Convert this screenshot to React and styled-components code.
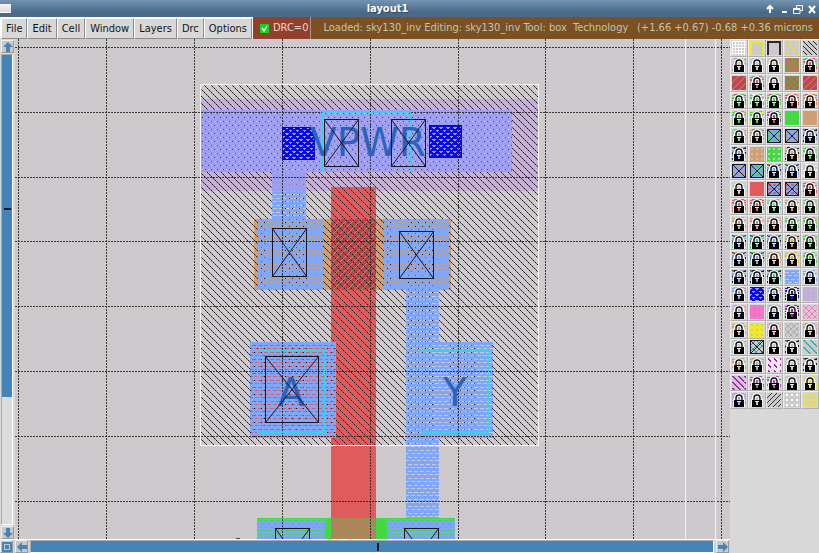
import React from "react";
import styled, { createGlobalStyle, css } from "styled-components";

const Global = createGlobalStyle`
  * { box-sizing: border-box; }
  body { margin: 0; background: #d8d8d8; overflow: hidden; }
  button { font: inherit; color: inherit; margin: 0; padding: 0; }
`;

const AppWindow = styled.div`
  display: flex;
  flex-direction: column;
  height: 100vh;
  font-family: "DejaVu Sans Condensed", "DejaVu Sans", sans-serif;
  font-size: 11px;
  line-height: 14px;
  color: #141414;
`;

const TitleBar = styled.header`
  display: flex;
  align-items: center;
  flex: none;
  height: 17px;
  color: #fff;
  background: linear-gradient(#7394b2 0, #66859f 25%, #567693 50%, #46698a 75%, #4a6c88 100%);
`;

const WindowGlyph = styled.span`
  width: 11px;
  height: 9px;
  background: linear-gradient(#f4f4f4, #dadada);
  border-bottom: 1px solid #fff;
`;

const Title = styled.h1`
  flex: 1;
  margin: 0;
  text-align: center;
  font-size: 11px;
  line-height: 17px;
  font-weight: bold;
  text-shadow: 1px 1px 0 #2f4b64;
`;

const TitleControls = styled.div`
  display: flex;
  gap: 2px;
  padding-right: 1px;
`;

const TitleButton = styled.button`
  width: 12px;
  height: 14px;
  border: 0;
  background: none;
  svg { display: block; }
`;

const MenuBar = styled.nav`
  display: flex;
  flex: none;
  height: 22px;
  padding-left: 1px;
  background: #fafafa;
  white-space: pre;
`;

const MenuButton = styled.button`
  height: 21px;
  margin-top: 1px;
  padding: 0 4px;
  border: 1px solid;
  border-color: #fff #8c8c8c #8c8c8c #fff;
  background: #d8d8d8;
`;

const DrcToggle = styled.label`
  display: flex;
  align-items: center;
  gap: 4px;
  flex: none;
  padding: 0 2px 0 7px;
  margin-left: 1px;
  background: #90402c;
  color: #e8d8d0;
  border-right: 1px solid #b49488;
`;

const Check = styled.input`
  appearance: none;
  margin: 0;
  width: 9px;
  height: 9px;
  flex: none;
  background: #10d818 url("data:image/svg+xml,%3Csvg xmlns='http://www.w3.org/2000/svg' viewBox='0 0 9 9'%3E%3Cpath d='M2 4l2 3L7 2' fill='none' stroke='white' stroke-width='1.4'/%3E%3C/svg%3E");
`;

const Status = styled.div`
  display: flex;
  flex: 1;
  min-width: 0;
  align-items: center;
  justify-content: space-between;
  padding: 0 6px 0 12px;
  background: #7c5022;
  color: #bec8ae;
`;

const StatusText = styled.span`
  flex: none;
`;

const Coordinates = styled.output`
  flex: none;
`;

const Body = styled.main`
  display: flex;
  flex: 1;
  min-height: 0;
`;

const View = styled.section`
  display: grid;
  flex: 1;
  min-width: 0;
  grid-template-columns: 15px 1fr;
  grid-template-rows: 1fr 14px;
  background: #cec9cd;
`;

const VerticalBar = styled.div`
  display: flex;
  flex-direction: column;
  gap: 1px;
  padding: 1px 1px 0;
  background: #d8d8d8;
`;

const HorizontalBar = styled.div`
  display: flex;
  grid-column: 1 / -1;
  gap: 2px;
  padding: 0 1px 0 0;
  border-top: 1px solid #fff;
  background: #d0d0d0;
`;

const ArrowButton = styled.button`
  display: grid;
  place-items: center;
  flex: none;
  width: 13px;
  height: 13px;
  border: 1px solid;
  border-color: #eee #999 #999 #eee;
  background: #c8c8c8;
`;

const Trough = styled.div`
  display: flex;
  flex: 1;
  background: #dcdcdc;
  border: 1px solid;
  border-color: #aaa #fff #fff #aaa;
  ${(p) => p.$vertical && css`flex-direction: column; margin-right: 1px;`}
`;

const Thumb = styled.div`
  display: grid;
  place-items: center;
  flex: none;
  background: #4484b8;
  ${(p) =>
    p.$vertical
      ? css`height: 73%; align-content: start; padding-top: 153px;`
      : css`width: 100%; padding-left: 12px;`}
`;

const ThumbMark = styled.span`
  background: #101820;
  ${(p) => (p.$vertical ? css`width: 7px; height: 2px;` : css`width: 2px; height: 8px;`)}
`;

const Canvas = styled.svg`
  display: block;
  width: 100%;
  height: 100%;
  min-height: 0;
  overflow: hidden;
`;

const NetLabel = styled.text`
  font-family: "DejaVu Sans", sans-serif;
  font-size: 39px;
  fill: #2a62bc;
  text-anchor: middle;
`;

const Palette = styled.aside`
  flex: none;
  width: 89px;
  background: #d8d8d8;
`;

const PaletteGrid = styled.div`
  display: grid;
  grid-template-columns: repeat(5, 1fr);
  grid-template-rows: repeat(21, 1fr);
  height: 370px;
`;

const Swatch = styled.button`
  display: grid;
  place-items: center;
  min-height: 0;
  min-width: 0;
  overflow: hidden;
  border: 1px solid;
  border-color: #eee #b0b0b0 #b0b0b0 #eee;
  background: #d8d8d8;
  svg { display: block; }
`;

function Patterns() {
  const hatch = (id, color, dir = 1, step = 7, alt = color, width = 1) => (
    <pattern id={id} key={id} width={step * 2} height={step * 2} patternUnits="userSpaceOnUse">
      {Array.from({ length: step * 4 }, (_, k) => {
        const y = k % (step * 2);
        const offset = k < step * 2 ? 0 : step;
        const x = (y + offset) % (step * 2);
        return (
          <rect
            key={k}
            x={dir > 0 ? x : step * 2 - 1 - x}
            y={y}
            width={width}
            height="1"
            fill={y % 2 ? alt : color}
          />
        );
      })}
    </pattern>
  );
  const mesh = (id, color) => (
    <pattern id={id} key={id} width="6" height="6" patternUnits="userSpaceOnUse">
      <path d="M0 0l6 6M6 0L0 6" stroke={color} strokeWidth="1.2" />
    </pattern>
  );
  const dots = (id, fill, dot) => (
    <pattern id={id} key={id} width="5" height="5" patternUnits="userSpaceOnUse">
      <rect width="5" height="5" fill={fill} />
      <rect x="1" y="1" width="2" height="2" fill={dot} />
    </pattern>
  );
  return (
    <defs>
      {hatch("hBlack", "#161416", 1, 7, "#5c585c")}
      {hatch("hYellow", "#e8e038", 1, 5)}
      {hatch("hTeal", "#28aca4", 1, 7, "#48b4b0", 2)}
      {hatch("hPurple", "#a018b8", 1, 6, "#a830bc", 2)}
      {hatch("hBlackSmall", "#202020", 1, 5)}
      {hatch("hBlackBack", "#303030", -1, 5)}
      {hatch("hGreen", "#68b030", 1, 7)}
      {hatch("hTan", "#c09058", -1, 7)}
      {mesh("mPink", "#f878c0")}
      {mesh("mGray", "#aaa")}
      {mesh("mGreen", "#58943c")}
      {mesh("mTeal", "#30a0a0")}
      {dots("dTan", "#d0a070", "#c8c0b0")}
      {dots("dGreen", "#42da42", "#b8d8b8")}
      {dots("dPink", "#fa70c8", "#d094bc")}
      {dots("dYellow", "#f0ec18", "#cec890")}
      {dots("dWhite", "#ccc", "#fff")}
      {dots("dYellow2", "#d8d4a0", "#f0e820")}
      <pattern id="gridWhite" width="3" height="3" patternUnits="userSpaceOnUse">
        <path d="M0 .5H3M.5 0V3" stroke="#fff" />
      </pattern>
      <pattern id="li" width="6" height="7" patternUnits="userSpaceOnUse">
        <path
          fill="#80a6fa"
          d="M0 0H6V2H0ZM4 2H6V3H4ZM0 3H6V5H0ZM1 5H3V6H1ZM0 6H6V7H0Z"
        />
      </pattern>
      <pattern id="metal" width="6" height="8" patternUnits="userSpaceOnUse">
        <rect width="6" height="8" fill="#9e9ef2" />
        <rect x="1" y="1" width="1" height="1" fill="#484880" />
        <rect x="4" y="5" width="1" height="1" fill="#38385c" />
        <rect x="4" y="1" width="2" height="1" fill="#ccb0d0" />
        <rect x="1" y="5" width="2" height="1" fill="#c4acd8" />
        <rect x="2" y="3" width="2" height="1" fill="#88a0f4" />
      </pattern>
      <pattern id="greenSpecks" width="12" height="10" patternUnits="userSpaceOnUse">
        <path fill="#50d860" d="M2 1h1v1H2zM8 5h1v1H8zM5 8h1v1H5z" />
      </pattern>
      <pattern id="via" width="7" height="6" patternUnits="userSpaceOnUse">
        <rect width="7" height="6" fill="#0808e8" />
        <path fill="#9c9cec" d="M0 1h2v1H0zM5 1h2v1H5zM0 2h1v1H0zM6 2h1v1H6zM2 4h3v1H2zM3 5h1v1H3z" />
      </pattern>
      <pattern id="lavender" width="4" height="4" patternUnits="userSpaceOnUse">
        <rect width="4" height="4" fill="#c4b0d8" />
        <rect x="1" y="1" width="1" height="1" fill="#b4a2cc" />
      </pattern>
      <pattern id="purpleDash" width="6" height="6" patternUnits="userSpaceOnUse">
        <rect width="6" height="6" fill="#f0e8f0" />
        <path d="M1 1l3 2" stroke="#a818b8" strokeWidth="1.5" />
      </pattern>
    </defs>
  );
}

function Contact({ x, y, w, h }) {
  return (
    <g stroke="#18161c" fill="none">
      <rect x={x + 0.5} y={y + 0.5} width={w - 1} height={h - 1} />
      <path d={`M${x} ${y}l${w} ${h}M${x + w} ${y}l${-w} ${h}`} shapeRendering="auto" />
    </g>
  );
}

function Box({ x, y, w, h, fill, ...rest }) {
  return <rect x={x} y={y} width={w} height={h} fill={fill} {...rest} />;
}

const gridX = Array.from({ length: 24 }, (_, i) => 18 + Math.round(i * 87.9));
const gridY = Array.from({ length: 20 }, (_, i) => 47 + Math.round(i * 64.8));

function Layout() {
  return (
    <Canvas role="img" aria-label="sky130_inv layout" shapeRendering="crispEdges">
      <Patterns />
      <g transform="translate(-15 -39)">
        <Box x={201} y={99} w={337} h={92} fill="#c6b0d8" />
        <Box x={331} y={187} w={45} h={400} fill="#e05c5c" />
        <Box x={254} y={219} w={197} h={71} fill="#d0a070" />
        <Box x={331} y={219} w={45} h={71} fill="#b84650" />
        <Box x={331} y={219} w={45} h={71} fill="url(#hTan)" />
        <Box x={250} y={342} w={86} h={96} fill="#e05c5c" />
        <Box x={200} y={84} w={338} h={362} fill="url(#hBlack)" />
        <Box x={257} y={518} w={198} h={70} fill="#42da42" />
        <Box x={331} y={518} w={45} h={70} fill="#b48060" />
        <Box x={331} y={518} w={45} h={70} fill="url(#hGreen)" />
        <path
          fill="url(#li)"
          d="M272 172H306V219H323V289H257V219H272ZM383 219H449V289H439V342H493V438H439V518H406V289H383ZM250 342H336V438H250ZM257 519H325V600H257ZM387 519H455V600H387Z"
        />
        <Box x={272} y={172} w={34} h={20} fill="#a49ce8" opacity=".7" />
        <Box x={201} y={110} w={311} h={62} fill="url(#metal)" />
        <Box x={260} y={120} w={226} h={42} fill="url(#greenSpecks)" />
        <Box x={282.5} y={127.5} w={32} h={32} fill="url(#via)" stroke="#0000f0" />
        <Box x={429.5} y={125.5} w={32} h={32} fill="url(#via)" stroke="#0000f0" />

        <g fill="none" stroke="#222" strokeDasharray="2 1">
          {gridX.map((x) => <path key={x} d={`M${x + 0.5} 39V1300`} opacity=".85" />)}
          {gridY.map((y) => <path key={y} d={`M15 ${y + 0.5}H2000`} opacity=".85" />)}
        </g>
        <rect x="200.5" y="84.5" width="338" height="361" fill="none" stroke="#fafafa" />
        <path d="M685.5 39V1300M715.5 39V1300" stroke="#f4f4f4" />

        <g fill="none" stroke="#38d4ec">
          <rect x="322.5" y="112.5" width="88" height="59" />
          <rect x="257.5" y="350.5" width="67" height="82" />
          <rect x="421.5" y="350.5" width="67" height="82" />
        </g>
        <NetLabel x="368" y="156">VPWR</NetLabel>
        <NetLabel x="291" y="406">A</NetLabel>
        <NetLabel x="455" y="406">Y</NetLabel>
        <Contact x={324} y={119} w={35} h={48} />
        <Contact x={391} y={119} w={35} h={48} />
        <Contact x={272} y={228} w={35} h={49} />
        <Contact x={399} y={231} w={35} h={48} />
        <Contact x={265} y={356} w={54} h={67} />
        <Contact x={275} y={528} w={35} h={48} />
        <Contact x={404} y={528} w={35} h={48} />
        <path d="M236 538.5H240" stroke="#444" />
      </g>
    </Canvas>
  );
}

const blue = "#80a8f8";
const green = "#42da42";
const tan = "#d0a070";
const red = "#e05c5c";
const gray = "#c8c8c8";
const lock = (color, second, dark) => ({ kind: "lock", color, second, dark });
const fill = (base, pattern) => ({ kind: "fill", base, pattern });
const cross = (base, dash, pattern) => ({ kind: "cross", base, dash, pattern });
const edge = (color) => ({ kind: "edge", color });

const layers = [
  fill("#ccc", "gridWhite"), edge("#f0ec10"), edge("#302830"), fill("#cec9cd", "hYellow"), fill("#cec9cd", "hBlackSmall"),
  lock(gray, "#999"), lock(gray, "#b8c4d8"), lock(gray, "#e4dc38"), fill("#ac7c58", "hGreen"), lock(red, green),
  fill("#bd4652", "hTan"), lock(red, "#88b090"), lock(gray), fill("#ac7858", "mGreen"), fill("#bd4652", "hTan"),
  lock(green, "#a06840"), lock(green, "#fff"), lock(green, red), lock(red, tan), lock("#e8883c", red),
  lock(green, tan), lock(green, "#f0e820"), lock("#c03888", green), fill(green), fill(tan),
  lock("#80d890", "#d88080"), lock(tan, "#888"), cross(blue, green), cross(blue, tan), lock(blue, "#222", true),
  lock(blue, "#222", true), fill(tan, "dTan"), fill(green, "dGreen"), lock(tan, "#222"), lock(green, "#b8b8b8"),
  cross(blue, tan), cross(blue, green), lock(blue, tan, true), lock(blue, green, true), lock(gray, "#fff"),
  lock(gray), fill(red), cross(blue, red), cross(blue, red), lock(red, "#e8a0a0"),
  lock(red, red), lock(red, red), lock("#70d880", "#ddd"), lock(tan, "#ddd"), lock("#70d880", tan),
  lock(tan, "#ddd"), lock("#e88888", "#ddd"), lock(tan, "#c4a4a0"), lock(green, "#ddd"), lock(green, tan),
  lock(blue, green, true), lock("#48b8c0", green, true), lock(blue, green, true), lock(tan, "#222"), lock(green, "#999"),
  lock(blue, tan, true), lock(blue, green, true), lock(tan, "#d0b040"), lock("#e0b838", "#f0dc30"), lock(green, "#bbb"),
  lock(blue, "#222", true), lock(blue, "#222", true), lock("#50c890", "#222", true), fill("#c4cce8", "li"), lock(blue, "#ccd8f0"),
  lock(blue, tan), fill("#0808e8", "via"), lock(blue, tan), lock("#1818e8", "#222"), fill("#c4b0d8", "lavender"),
  lock("#c4b0d8", tan), fill("#f870c8", "dPink"), lock("#c4b0d8", "#b0a0d0"), lock("#a018b8", "#222"), fill("#dcc8d4", "mPink"),
  lock(tan, "#e8d090"), fill("#f0ec18", "dYellow"), lock("#f090c0", tan), fill("#ccc", "mGray"), lock(tan, "#c4a0c8"),
  lock(gray, "#80c0b8"), cross("#c4cccc", null, "mTeal"), lock(gray, "#bbb"), lock(gray, "#222", true), fill("#cec9cd", "hTeal"),
  lock(tan, "#ddd"), lock("#88bcb8", tan), fill("#eee", "purpleDash"), lock(gray, "#999"), lock(gray, "#222", true),
  fill("#cec9cd", "hPurple"), lock("#b050c0", "#ddd"), lock("#b050c0", "#ddd"), lock(gray, "#bbb"), lock("#e8e028", "#ccc"),
  lock("#b090e0", "#b090e0"), lock(gray), fill("#cec9cd", "hBlackBack"), fill("#ccc", "dWhite"), fill("#ccc", "dYellow2"),
];

function SwatchArt({ kind, color, second, dark, base, pattern, dash }) {
  if (kind === "edge") {
    return (
      <svg width="14" height="14" shapeRendering="crispEdges">
        <rect width="14" height="14" fill="#cec9cd" />
        <path d="M1 14V1H13V14" fill="none" stroke={color} strokeWidth="2" />
      </svg>
    );
  }
  if (kind === "lock") {
    return (
      <svg width="14" height="14">
        <rect width="14" height="14" fill="#d0d0d0" />
        <path d="M0 1h3v1H0zM0 3h2v2H0zM0 8h1v2H0zM9 0h3v1H9zM12 3h2v1h-2zM13 8h1v3h-1z" fill={color} />
        {second && <path d="M2 0h3v1H2zM0 6h1v1H0zM12 1h2v1h-2zM13 5h1v2h-1zM0 11h1v2H0z" fill={second} />}
        {dark && <path d="M0 0l3 2M0 5v3M14 0l-3 2M13.5 5v2" stroke="#222" fill="none" />}
        <path d="M3.5 7V5Q3.5 2 7 2T10.5 5V7" fill="#e4e4e4" stroke="#fff" strokeWidth="3" />
        <path d="M1 6H13V14H1Z" fill="#f4f4f4" />
        <path d="M6 4h2v3H6z" fill={color} />
        <path d="M4 8V5Q4 2 7 2T10 5V8" fill="none" stroke="#111" strokeWidth="1.4" />
        <rect x="2" y="7" width="10" height="7" fill="#000" />
        <path d="M6 9h2v3H6z" fill={color} />
        <path d="M5 8h4v1H5z" fill="#e8e8e8" />
      </svg>
    );
  }
  return (
    <svg width="14" height="14">
      <rect width="14" height="14" fill={base} />
      {pattern && <rect width="14" height="14" fill={`url(#${pattern})`} shapeRendering="crispEdges" />}
      {kind === "cross" && (
        <>
          {dash && <path d="M1 3H13M1 7H13M1 11H13" stroke={dash} strokeWidth="2" strokeDasharray="3 2" />}
          <path d="M.5.5H13.5V13.5H.5ZM0 0L14 14M14 0L0 14" fill="none" stroke="#181c28" />
        </>
      )}
    </svg>
  );
}

const arrows = {
  up: "M5 0L10 5H7V10H3V5H0Z",
  down: "M5 10L0 5H3V0H7V5H10Z",
  left: "M0 5L5 0V3H10V7H5V10Z",
  right: "M10 5L5 10V7H0V3H5V0Z",
  zoom: "M0 0H10V10H0ZM2 2V8H8V2ZM3 3H7V7H3Z",
};

function Arrow({ direction, label }) {
  return (
    <ArrowButton aria-label={label}>
      <svg width="10" height="10" display="block">
        <path d={arrows[direction]} fill="#4484b8" fillRule="evenodd" />
      </svg>
    </ArrowButton>
  );
}

const controls = [
  ["Raise", "M6 11V4M3 7L6 4L9 7"],
  ["Minimize", "M4 10H9"],
  ["Restore", "M4.5 6V3.5H10.5V8.5H8M1.5 6.5H8V11.5H1.5ZM1.5 7.5H8"],
  ["Close", "M3 4L9 11M9 4L3 11"],
];

const menus = ["File", "Edit", "Cell", "Window", "Layers", "Drc", "Options"];

export default function App() {
  return (
    <AppWindow>
      <Global />
      <TitleBar>
        <WindowGlyph />
        <Title>layout1</Title>
        <TitleControls>
          {controls.map(([name, d]) => (
            <TitleButton key={name} aria-label={name}>
              <svg width="12" height="14" fill="none" stroke="#fff" strokeWidth={name === "Restore" ? 1 : 2}>
                <path d={d} />
              </svg>
            </TitleButton>
          ))}
        </TitleControls>
      </TitleBar>
      <MenuBar>
        {menus.map((m) => <MenuButton key={m}>{m}</MenuButton>)}
        <DrcToggle>
          <Check type="checkbox" defaultChecked />
          DRC=0
        </DrcToggle>
        <Status>
          <StatusText>Loaded: sky130_inv Editing: sky130_inv Tool: box  Technology</StatusText>
          <Coordinates>(+1.66 +0.67) -0.68 +0.36 microns</Coordinates>
        </Status>
      </MenuBar>
      <Body>
        <View>
          <VerticalBar>
            <Arrow direction="up" label="Scroll up" />
            <Trough $vertical>
              <Thumb $vertical><ThumbMark $vertical /></Thumb>
            </Trough>
            <Arrow direction="down" label="Scroll down" />
          </VerticalBar>
          <Layout />
          <HorizontalBar>
            <Arrow direction="zoom" label="Zoom to fit" />
            <Arrow direction="left" label="Scroll left" />
            <Trough>
              <Thumb><ThumbMark /></Thumb>
            </Trough>
            <Arrow direction="right" label="Scroll right" />
          </HorizontalBar>
        </View>
        <Palette aria-label="Layers">
          <PaletteGrid>
            {layers.map((layer, i) => (
              <Swatch key={i} aria-label={`Layer ${i + 1}`}>
                <SwatchArt {...layer} />
              </Swatch>
            ))}
          </PaletteGrid>
        </Palette>
      </Body>
    </AppWindow>
  );
}
